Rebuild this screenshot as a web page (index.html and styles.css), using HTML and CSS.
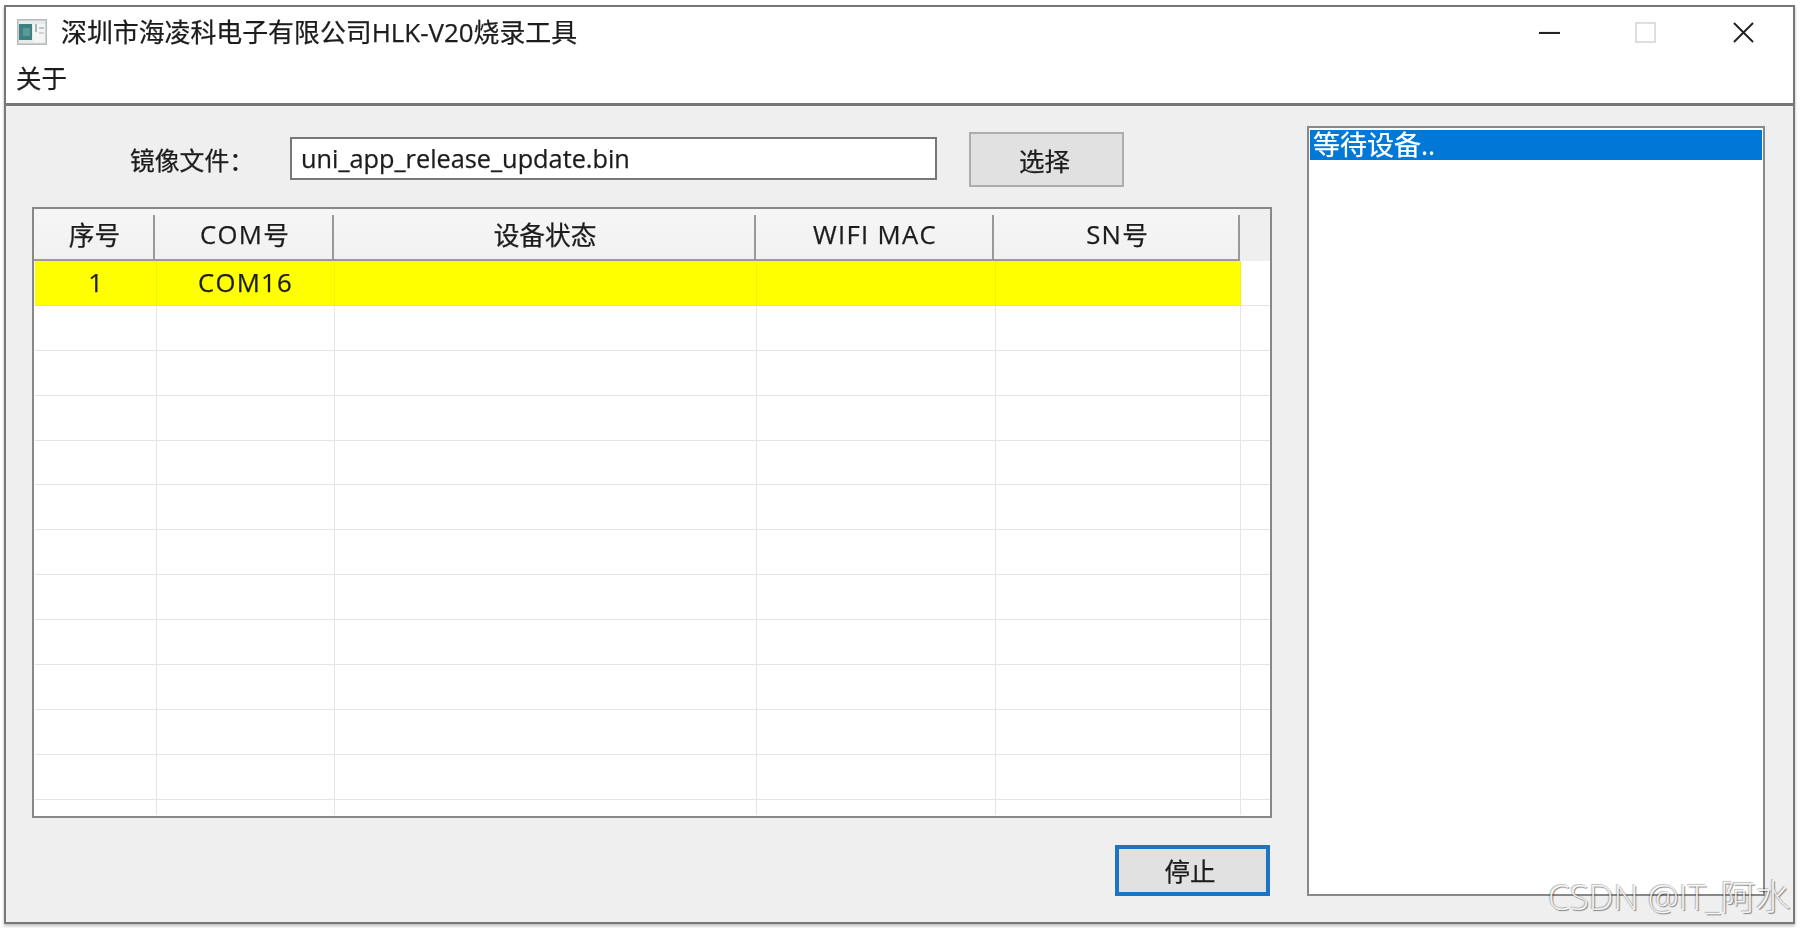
FILE: index.html
```html
<!DOCTYPE html>
<html lang="zh-CN">
<head>
<meta charset="utf-8">
<title>深圳市海凌科电子有限公司HLK-V20烧录工具</title>
<link rel="stylesheet" href="styles.css">
</head>
<body>
<div class="window">
  <header class="chrome">
    <div class="titlebar">
      <svg class="app-icon" viewBox="0 0 30 26" aria-hidden="true">
        <rect x="0.75" y="0.75" width="28.5" height="24.5" fill="#e6eaea" stroke="#b4b9ba" stroke-width="1.5"/>
        <rect x="2" y="5" width="13" height="16" fill="#3c8082"/>
        <rect x="6" y="9" width="7" height="8" fill="#5c9a9a"/>
        <rect x="16" y="5" width="12" height="18" fill="#f2f5f4"/>
        <rect x="18" y="5" width="2" height="8" fill="#aab4b5"/>
        <rect x="22" y="8" width="5" height="2" fill="#bcc5c5"/>
        <rect x="22" y="13" width="5" height="2" fill="#ccd3d3"/>
      </svg>
      <span class="title">深圳市海凌科电子有限公司HLK-V20烧录工具</span>
      <div class="controls">
        <svg class="ctl ctl-min" viewBox="0 0 22 22" aria-hidden="true"><path d="M0 11.5H22" stroke="#222" stroke-width="2.2" fill="none"/></svg>
        <svg class="ctl ctl-max" viewBox="0 0 22 22" aria-hidden="true"><rect x="1" y="1" width="20" height="20" stroke="#d4d4d4" stroke-width="1.6" fill="none"/></svg>
        <svg class="ctl ctl-close" viewBox="0 0 22 22" aria-hidden="true"><path d="M1 1L21 21M21 1L1 21" stroke="#222" stroke-width="2" fill="none"/></svg>
      </div>
    </div>
    <nav class="menubar"><span class="menu-item">关于</span></nav>
  </header>
  <main class="content">
    <section class="left">
      <div class="file-row">
        <label class="file-label">镜像文件：</label>
        <div class="file-input">uni_app_release_update.bin</div>
        <button class="btn btn-select">选择</button>
      </div>
      <div class="grid">
        <div class="grid-head">
          <div class="hcell h1">序号</div>
          <div class="hcell h2"><span class="lat">COM</span>号</div>
          <div class="hcell h3">设备状态</div>
          <div class="hcell h4"><span class="lat">WIFI MAC</span></div>
          <div class="hcell h5"><span class="lat">SN</span>号</div>
        </div>
        <div class="grid-body">
          <div class="row row-active"><div class="cell">1</div><div class="cell"><span class="lat">COM16</span></div><div class="cell"></div><div class="cell"></div><div class="cell"></div><div class="cell cell-end"></div></div>
          <div class="row"><div class="cell"></div><div class="cell"></div><div class="cell"></div><div class="cell"></div><div class="cell"></div><div class="cell cell-end"></div></div>
          <div class="row"><div class="cell"></div><div class="cell"></div><div class="cell"></div><div class="cell"></div><div class="cell"></div><div class="cell cell-end"></div></div>
          <div class="row"><div class="cell"></div><div class="cell"></div><div class="cell"></div><div class="cell"></div><div class="cell"></div><div class="cell cell-end"></div></div>
          <div class="row"><div class="cell"></div><div class="cell"></div><div class="cell"></div><div class="cell"></div><div class="cell"></div><div class="cell cell-end"></div></div>
          <div class="row"><div class="cell"></div><div class="cell"></div><div class="cell"></div><div class="cell"></div><div class="cell"></div><div class="cell cell-end"></div></div>
          <div class="row"><div class="cell"></div><div class="cell"></div><div class="cell"></div><div class="cell"></div><div class="cell"></div><div class="cell cell-end"></div></div>
          <div class="row"><div class="cell"></div><div class="cell"></div><div class="cell"></div><div class="cell"></div><div class="cell"></div><div class="cell cell-end"></div></div>
          <div class="row"><div class="cell"></div><div class="cell"></div><div class="cell"></div><div class="cell"></div><div class="cell"></div><div class="cell cell-end"></div></div>
          <div class="row"><div class="cell"></div><div class="cell"></div><div class="cell"></div><div class="cell"></div><div class="cell"></div><div class="cell cell-end"></div></div>
          <div class="row"><div class="cell"></div><div class="cell"></div><div class="cell"></div><div class="cell"></div><div class="cell"></div><div class="cell cell-end"></div></div>
          <div class="row"><div class="cell"></div><div class="cell"></div><div class="cell"></div><div class="cell"></div><div class="cell"></div><div class="cell cell-end"></div></div>
          <div class="row"><div class="cell"></div><div class="cell"></div><div class="cell"></div><div class="cell"></div><div class="cell"></div><div class="cell cell-end"></div></div>
        </div>
      </div>
      <div class="actions"><button class="btn btn-stop">停止</button></div>
    </section>
    <aside class="log">
      <div class="log-item">等待设备..</div>
    </aside>
  </main>
</div>
<div class="watermark">CSDN @IT_阿水</div>
</body>
</html>
```
FILE: styles.css
```css
* { box-sizing: border-box; }
html, body { margin: 0; height: 100%; }
body {
  background: #fff;
  overflow: hidden;
  padding: 5px 5px 5px 4px;
  font-family: "Open Sans", "Noto Sans CJK SC", sans-serif;
  font-size: 24px;
  color: #1c1c1c;
}
.window {
  width: 1791px;
  height: 919px;
  border: 2px solid #777;
  display: flex;
  flex-direction: column;
  box-shadow: 0 2px 3px #bbb;
  filter: blur(0.45px);
  -webkit-text-stroke: 0.25px;
}
.chrome {
  flex: none;
  height: 99px;
  background: #fff;
  border-bottom: 3px solid #777;
}
.titlebar {
  height: 50px;
  display: flex;
  align-items: center;
  padding-left: 11px;
}
.app-icon { width: 30px; height: 26px; flex: none; }
.title { margin-left: 14px; font-size: 25.9px; line-height: 30px; }
.controls { margin-left: auto; display: flex; padding-right: 39px; }
.ctl { width: 21px; height: 21px; display: block; }
.ctl-min { margin-left: -1px; }
.ctl-max { margin-left: 75px; }
.ctl-close { margin-left: 77px; }
.menubar { height: 42px; padding-left: 10px; display: flex; align-items: center; }
.menu-item { font-size: 25.5px; line-height: 30px; }
.content {
  flex: 1;
  min-height: 0;
  background: #efefef;
  display: flex;
  padding: 20px 29px 26px 26px;
  gap: 35px;
}
.left { width: 1240px; flex: none; display: flex; flex-direction: column; }
.file-row { height: 55px; margin-top: 6px; display: flex; align-items: center; }
.file-label { margin-left: 98px; width: 160px; font-size: 24.8px; line-height: 30px; flex: none; }
.file-input {
  width: 647px;
  height: 43px;
  margin-bottom: 3px;
  background: #fff;
  border: 2px solid #777;
  padding-left: 9px;
  line-height: 38px;
  font-size: 25.3px;
  flex: none;
}
.btn {
  font: inherit;
  font-size: 25.5px;
  color: #1c1c1c;
  background: #e1e1e1;
  display: block;
}
.btn-select { width: 155px; height: 55px; margin-left: 32px; border: 2px solid #adadad; padding: 0 4px 0 0; }
.grid {
  margin-top: 20px;
  height: 611px;
  border: 2px solid #888;
  background: #fff;
  display: flex;
  flex-direction: column;
}
.grid-head {
  height: 52px;
  flex: none;
  display: flex;
  background: #efefef;
}
.hcell {
  height: 52px;
  border-bottom: 2px solid #999;
  background:
    linear-gradient(#999, #999) right bottom / 2px 44px no-repeat,
    linear-gradient(#f6f6f6, #f1f1f1);
  display: flex;
  align-items: center;
  justify-content: center;
  font-size: 25.7px;
  flex: none;
}
.lat { letter-spacing: 1.3px; }
.h1 { width: 121px; }
.h2 { width: 179px; }
.h3 { width: 422px; }
.h4 { width: 238px; }
.h5 { width: 246px; }
.grid-body { height: 554px; flex: none; overflow: hidden; padding-left: 1px; }
.row {
  height: 44.9px;
  display: grid;
  grid-template-columns: 122px 178px 422px 239px 245px 29px;
}
.cell {
  border-right: 1px solid #e5e5e5;
  border-bottom: 1px solid #e5e5e5;
  display: flex;
  align-items: center;
  justify-content: center;
  font-size: 25.7px;
}
.cell-end { border-right: 0; }
.row-active .cell { background: #ffff00; border-color: #f4f400; }
.row-active .cell-end { background: #fff; border-color: #e5e5e5; }
.actions { flex: 1; display: flex; justify-content: flex-end; align-items: flex-end; padding-right: 2px; }
.btn-stop { width: 155px; height: 51px; border: 4px solid #1c74c4; padding: 0 5px 2px 0; }
.log {
  width: 458px;
  flex: none;
  background: #fff;
  border: 2px solid #888;
  padding: 2px 1px;
}
.log-item {
  height: 30px;
  background: #0078d7;
  color: #fff;
  font-size: 27px;
  line-height: 29px;
  padding-left: 3px;
}
.watermark {
  position: absolute;
  left: 1548px;
  top: 876px;
  font-size: 35px;
  font-weight: 300;
  line-height: 42px;
  white-space: nowrap;
  color: rgba(255, 255, 255, .85);
  text-shadow: 1px 1px 1px rgba(0, 0, 0, .45), -1px -1px 1px rgba(0, 0, 0, .25);
}
```
